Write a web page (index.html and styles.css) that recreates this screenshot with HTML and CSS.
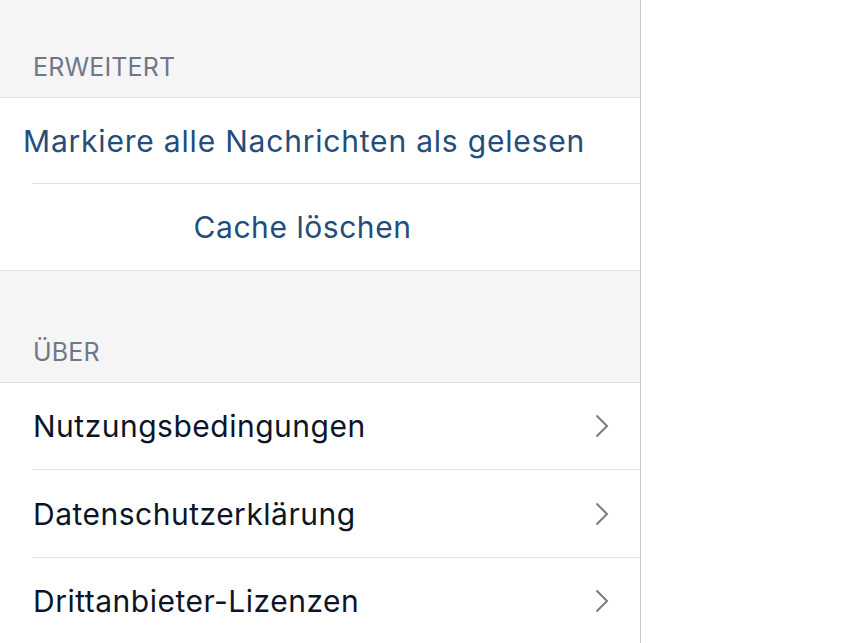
FILE: index.html
```html
<!DOCTYPE html>
<html lang="de">
<head>
<meta charset="utf-8">
<title>Einstellungen</title>
<link rel="stylesheet" href="styles.css">
</head>
<body>
<div class="layout">
  <div class="panel">
    <div class="section-header first"><span>ERWEITERT</span></div>
    <div class="group group-advanced">
      <div class="row action-left"><span class="link">Markiere alle Nachrichten als gelesen</span></div>
      <div class="row action-center"><span class="link">Cache löschen</span></div>
    </div>
    <div class="section-header second"><span>ÜBER</span></div>
    <div class="group group-about">
      <div class="row nav"><span class="label">Nutzungsbedingungen</span><svg class="chev" width="14" height="24" viewBox="0 0 14 24"><path d="M1.5 1.5 L12 12 L1.5 22.5" fill="none" stroke="#7b7b7e" stroke-width="2"/></svg></div>
      <div class="row nav"><span class="label">Datenschutzerklärung</span><svg class="chev" width="14" height="24" viewBox="0 0 14 24"><path d="M1.5 1.5 L12 12 L1.5 22.5" fill="none" stroke="#7b7b7e" stroke-width="2"/></svg></div>
      <div class="row nav"><span class="label">Drittanbieter-Lizenzen</span><svg class="chev" width="14" height="24" viewBox="0 0 14 24"><path d="M1.5 1.5 L12 12 L1.5 22.5" fill="none" stroke="#7b7b7e" stroke-width="2"/></svg></div>
    </div>
  </div>
  <div class="detail"></div>
</div>
</body>
</html>
```
FILE: styles.css
```css
html, body {
  margin: 0;
  padding: 0;
  height: 100%;
  background: #ffffff;
  font-family: Inter, "Noto Sans", sans-serif;
}
.layout {
  display: flex;
  height: 100vh;
  overflow: hidden;
}
.panel {
  width: 640px;
  flex: none;
  background: #f5f5f5;
  border-right: 1px solid #c8c8c8;
  overflow: hidden;
}
.detail {
  flex: 1;
  background: #ffffff;
}
.section-header {
  display: flex;
  align-items: flex-end;
  padding: 0 0 15px 33px;
  box-sizing: border-box;
  color: #6f7888;
  font-size: 25px;
  line-height: 30px;
  letter-spacing: 0.15px;
}
.section-header.first { height: 97px; }
.section-header.second { height: 111px; }
.group {
  background: #ffffff;
  border-top: 1px solid #e2e2e2;
  border-bottom: 1px solid #e2e2e2;
}
.row {
  height: 86px;
  display: flex;
  align-items: center;
  position: relative;
  box-sizing: border-box;
}
.row + .row {
  border-top: 1px solid transparent;
  height: 87px;
}
.row + .row::before {
  content: "";
  position: absolute;
  top: -1px;
  left: 32px;
  right: 0;
  height: 1px;
  background: #e2e2e2;
}
.group-advanced .row:first-child { height: 85px; }
.group-about .row:nth-child(2) { height: 88px; }
.link {
  color: #244d7c;
  font-size: 30px;
  letter-spacing: 0.8px;
}
.action-left { padding-left: 23px; }
.action-center {
  justify-content: center;
  padding-right: 35px;
}
.action-center .link { letter-spacing: 0.55px; }
.nav {
  padding: 0 31px 0 33px;
  justify-content: space-between;
}
.label {
  color: #0c1528;
  font-size: 30px;
  letter-spacing: 0.5px;
}
.chev { display: block; }
```
